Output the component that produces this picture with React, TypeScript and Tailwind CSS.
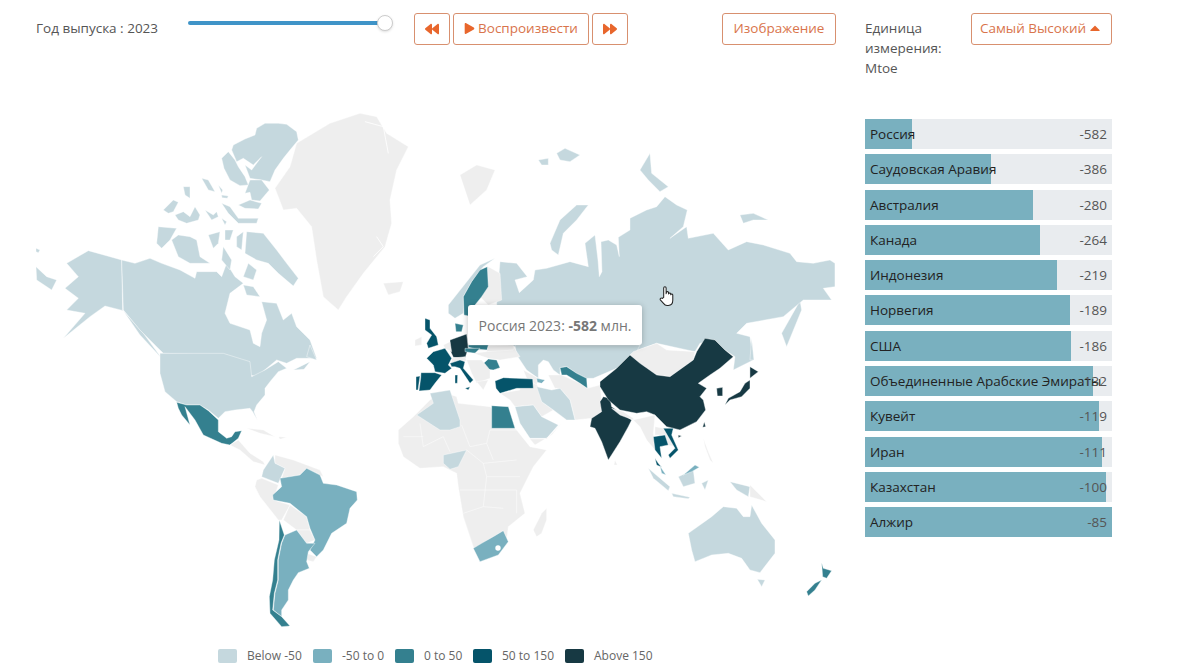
import { FaBackward, FaCaretUp, FaForward, FaPlay } from 'react-icons/fa';

const LIGHT = '#c5d8de';
const MID = '#79b0bf';
const TEAL = '#34808f';
const DEEP = '#05546a';
const DARK = '#173943';
const GREY = '#eeeeee';

type Shape = [string, string];

// coordinates are 3x page pixels, measured from the offset of each group
const canada: Shape[] = [
  [GREY, '735,265 780,200 800,130 900,70 990,40 1040,50 1070,100 1135,140 1100,210 1080,300 1085,370 1065,440 1000,520 950,590 925,630 880,590 860,480 845,380 800,325 760,330 745,290'],
  [GREY, '1060,550 1120,545 1110,575 1075,585'],
  [LIGHT, '110,490 175,452 275,480 278,630 340,700 395,775 330,705 280,632 225,618 180,650 100,715 165,640 110,630 145,595 105,565 145,530'],
  [LIGHT, '18,500 50,530 80,540 65,570 20,540'],
  [LIGHT, '18,445 30,450 25,458 18,455'],
  [LIGHT, '275,480 315,490 360,475 395,490 450,510 495,535 500,515 560,515 575,530 590,490 615,530 640,550 600,580 585,640 600,670 660,690 670,730 690,740 695,700 710,660 695,605 740,610 760,660 785,640 800,680 840,720 860,775 800,775 770,790 740,780 680,830 660,825 655,790 590,765 400,760 380,740 330,690 280,630'],
  [LIGHT, '385,380 440,385 420,420 395,445 380,430'],
  [LIGHT, '425,420 445,405 480,410 500,420 510,470 540,490 480,490 445,470'],
  [LIGHT, '535,405 570,395 565,430 550,445'],
  [LIGHT, '585,390 610,390 600,420 585,420'],
  [LIGHT, '620,410 640,395 635,450 620,440'],
  [LIGHT, '650,395 700,400 740,450 770,490 805,535 790,558 745,520 715,490 680,480 645,460'],
  [LIGHT, '580,440 605,480 600,510 575,480'],
  [LIGHT, '640,555 670,560 690,590 650,585'],
  [LIGHT, '655,490 680,510 670,540 640,530'],
];

const arctic: Shape[] = [
  [LIGHT, '250,90 285,72 315,60 320,40 345,25 385,25 410,28 440,50 445,75 420,105 400,130 375,165 360,200 335,195 300,190 285,150 305,165 335,125 310,150 280,130 260,140 245,105'],
  [LIGHT, '215,130 235,110 255,135 265,155 285,185 295,210 270,212 240,195 222,160'],
  [LIGHT, '300,195 335,195 358,225 330,258 305,255 300,232 285,235'],
  [LIGHT, '265,270 300,255 335,265 325,282 285,280'],
  [LIGHT, '155,190 175,195 195,230 175,225'],
  [LIGHT, '205,210 218,225 215,235'],
  [LIGHT, '215,265 240,275 265,310 325,310 320,325 265,325 250,310 235,295'],
  [LIGHT, '40,285 70,255 85,262 70,290 55,295'],
  [LIGHT, '75,300 100,290 120,305 135,275 150,300 145,315 110,325 85,315'],
  [LIGHT, '165,285 190,300 200,290 205,305 185,315'],
  [LIGHT, '215,310 230,320 225,330'],
  [LIGHT, '100,215 120,215 120,250 105,240'],
  [LIGHT, '215,240 235,243 232,250 216,248'],
];

const usa: Shape[] = [
  [LIGHT, '30,40 220,40 300,65 305,110 345,90 385,65 410,85 385,95 360,125 345,145 345,165 320,195 312,215 322,240 308,215 300,205 255,210 225,215 205,235 175,210 150,195 110,195 80,185 45,155 30,100'],
  [LIGHT, '430,90 480,65 462,88'],
  [LIGHT, '480,15 500,60 470,50'],
  [TEAL, '80,187 110,195 150,195 175,212 205,240 205,275 230,295 245,290 255,275 275,272 265,295 240,315 215,310 160,285 135,240 105,200 120,255 95,225 85,205'],
  [GREY, '240,315 265,300 300,340 340,365 345,375 310,365 270,330'],
  [GREY, '290,265 340,270 375,290 330,280'],
  [GREY, '385,290 410,292 390,298'],
];

const southAmericaAfrica: Shape[] = [
  [GREY, '375,225 430,240 510,270 520,290 470,265 450,285 395,295 405,265 375,250'],
  [LIGHT, '370,225 340,270 335,290 385,310 405,265 375,250'],
  [GREY, '320,300 335,295 385,315 370,360 420,375 395,420 385,420 330,350 315,320'],
  [GREY, '420,375 470,410 480,450 440,450 400,420'],
  [GREY, '440,450 480,450 495,480 470,490'],
  [GREY, '470,520 500,530 490,545 470,540'],
  [MID, '390,295 450,285 470,265 510,285 520,310 560,315 620,335 622,360 600,385 590,430 545,460 520,510 500,530 480,510 495,480 480,445 470,410 420,370 370,360 368,345 395,320'],
  [MID, '405,465 440,450 470,490 495,490 475,515 470,545 478,565 445,578 430,600 415,630 415,660 395,690 395,710 370,690 375,640 385,600 385,540 395,490'],
  [TEAL, '388,420 403,465 393,490 383,540 383,600 373,640 368,690 395,710 420,738 395,740 360,700 358,650 368,600 373,540 387,480'],
  [GREY, '745,150 790,110 840,60 880,35 920,50 925,70 1020,80 1100,150 1140,200 1190,210 1150,260 1110,340 1125,400 1075,440 1070,480 1040,520 990,545 970,500 940,410 925,320 920,280 880,260 810,265 760,230 745,190'],
  [GREY, '1190,385 1175,400 1150,450 1160,470 1175,460 1190,420'],
  [LIGHT, '880,225 950,210 925,260 900,268 880,250'],
  [MID, '970,505 995,490 1030,470 1060,452 1075,485 1045,525 990,545'],
];

const eurasia: Shape[] = [
  [GREY, '180,135 230,105 285,120 260,180 210,225'],
  [LIGHT, '415,90 445,85 445,105 425,105'],
  [LIGHT, '470,70 495,55 540,75 510,95 480,90'],
  [LIGHT, '450,340 480,270 530,225 565,225 530,270 490,310 475,375 455,360'],
  [LIGHT, '720,120 750,70 755,130 805,170 780,185 745,150'],
  [LIGHT, '1020,255 1060,250 1105,270 1060,270 1030,280'],
  [LIGHT, '1145,610 1190,530 1200,510 1205,540 1160,650'],
  [LIGHT, '300,395 350,400 382,440 345,450 358,488 400,450 405,420 440,415 510,395 565,410 555,340 585,315 594,390 598,440 606,425 603,335 625,330 650,345 658,380 655,322 690,300 690,265 740,240 770,230 795,200 830,225 862,240 850,290 810,325 860,290 865,325 940,310 985,360 1040,335 1090,345 1170,370 1190,395 1240,400 1290,390 1305,400 1305,470 1270,475 1295,510 1210,510 1150,560 1040,580 1010,610 1050,620 1060,690 1000,720 1005,680 975,660 945,630 900,640 885,665 770,640 700,665 640,650 560,655 420,650 375,690 345,650 300,640 290,520'],
];

const middleEast: Shape[] = [
  [LIGHT, '105,0 480,0 470,20 450,30 410,70 340,100 320,100 290,85 260,65 240,68 240,90 220,75 205,50 190,45 175,60 175,100 140,75 110,30'],
  [GREY, '205,90 245,90 300,115 322,130 360,120 365,165 365,200 335,220 285,225 270,165 240,130 225,130'],
  [GREY, '60,145 120,135 105,100 160,105 175,125 185,170 220,195 185,215 160,180 105,185 90,165'],
  [GREY, '130,75 175,100 170,120 140,100'],
  [LIGHT, '170,125 215,135 240,130 270,165 285,225 260,225 220,195 185,170'],
  [LIGHT, '105,185 160,180 185,215 235,240 200,280 150,280 120,235'],
  [GREY, '150,282 200,282 245,235 215,270 165,300'],
  [MID, '170,100 195,105 185,115 172,112'],
  [TEAL, '240,68 260,65 290,85 320,100 322,130 300,115 260,90 245,90'],
  [TEAL, '35,182 85,185 105,250 35,250'],
  [DEEP, '45,108 70,98 110,100 158,102 160,130 110,130 60,145 48,130'],
  [TEAL, '5,60 25,42 50,45 60,68 40,75 15,72'],
  [DARK, '370,155 390,160 395,185 455,225 445,245 420,290 385,345 365,290 345,250 330,245 335,220 365,200 360,170'],
];

const eastAsia: Shape[] = [
  [GREY, '700,665 770,640 800,660 885,665 880,690 810,740 770,735 720,700 690,675'],
  [DARK, '600,755 650,715 690,675 720,700 770,735 810,740 880,690 890,665 915,625 945,630 975,660 1000,680 960,715 930,735 895,760 920,775 900,800 910,810 917,840 890,875 840,900 800,890 765,855 740,845 710,850 660,840 625,810 600,770'],
  [LIGHT, '1055,625 1062,690 1050,690'],
  [DARK, '1050,710 1075,725 1050,745'],
];

const asiaPacific: Shape[] = [
  [GREY, '215,85 250,95 280,115 280,120 240,105'],
  [GREY, '280,120 345,105 340,160 345,210 320,180 300,140'],
  [GREY, '345,140 370,145 410,200 380,195 370,165 345,165'],
  [DEEP, '340,170 375,165 385,195 360,200 365,235 345,210'],
  [DEEP, '370,145 400,145 395,165 415,210 390,235 385,225 405,205'],
  [DEEP, '345,235 355,250 365,262 350,255'],
  [MID, '360,258 378,285 365,280'],
  [LIGHT, '325,265 390,320 385,332 340,295'],
  [LIGHT, '395,340 450,352 445,356 400,350'],
  [LIGHT, '415,290 460,270 465,310 430,320'],
  [MID, '430,285 465,255 478,262 455,275'],
  [LIGHT, '485,310 505,300 495,330'],
  [LIGHT, '570,305 630,320 625,350 590,330'],
  [GREY, '630,315 680,365 630,350'],
  [GREY, '490,175 505,215 520,250 510,240 495,200'],
  [GREY, '225,240 232,255 222,255'],
  [LIGHT, '445,460 515,410 550,380 590,385 610,410 630,410 635,375 665,430 705,480 705,520 660,578 630,570 605,535 565,520 515,525 465,545 455,510'],
  [LIGHT, '652,598 675,600 665,620'],
  [TEAL, '845,548 850,565 875,572 860,595 848,590'],
  [TEAL, '845,600 825,630 805,648 800,635 825,610'],
  [DARK, '630,0 630,25 605,50 570,60 555,75 565,55 600,35 615,10'],
  [DARK, '530,25 548,22 548,48 532,48'],
  [DARK, '493,125 497,140 488,142'],
  [DARK, '415,165 425,168 415,173'],
];

const scandinavia: Shape[] = [
  [GREY, '265,20 300,40 305,120 265,135 240,110'],
  [LIGHT, '145,135 240,15 285,-5 250,20 215,65 190,110 190,160 165,175 145,160'],
  [TEAL, '240,30 262,20 265,80 245,110 225,135 215,170 192,165 190,110 215,65'],
  [TEAL, '165,190 190,195 185,215 168,215'],
  [GREY, '45,240 65,230 65,255 45,258'],
  [DEEP, '75,175 90,180 90,205 110,230 115,255 85,265 80,250 95,225 75,210'],
  [DARK, '150,240 200,222 205,265 195,295 160,292 150,270'],
  [TEAL, '205,255 265,255 262,270 235,268 205,262'],
  [TEAL, '195,265 240,265 225,280 195,275'],
];

const southEurope: Shape[] = [
  [LIGHT, '20,225 70,190 60,160 120,150 150,240 150,260 120,270 90,270'],
  [GREY, '100,15 120,5 125,35 105,25'],
  [GREY, '125,55 165,50 170,62 125,70'],
  [GREY, '170,60 215,60 240,90 240,115 200,130 185,100'],
  [GREY, '200,125 235,120 220,150'],
  [GREY, '190,40 230,35 310,20 330,50 270,60 235,55'],
  [GREY, '235,18 310,15 310,30 230,35'],
  [DEEP, '70,35 105,25 125,55 115,75 125,85 105,100 75,95 70,75 50,55'],
  [DEEP, '33,98 75,98 95,105 75,130 60,150 27,153 32,115'],
  [DEEP, '18,110 30,108 24,150 18,150'],
  [DEEP, '120,70 150,60 165,65 160,85 190,120 180,130 150,85 135,80 125,80'],
  [DEEP, '165,145 180,140 175,150'],
  [DEEP, '135,105 143,105 142,130 135,130'],
];

const bars = [
  { name: 'Россия', value: -582, width: 47 },
  { name: 'Саудовская Аравия', value: -386, width: 126 },
  { name: 'Австралия', value: -280, width: 168 },
  { name: 'Канада', value: -264, width: 175 },
  { name: 'Индонезия', value: -219, width: 192 },
  { name: 'Норвегия', value: -189, width: 205 },
  { name: 'США', value: -186, width: 206 },
  { name: 'Объединенные Арабские Эмираты', value: -132, width: 228 },
  { name: 'Кувейт', value: -119, width: 234 },
  { name: 'Иран', value: -111, width: 237 },
  { name: 'Казахстан', value: -100, width: 241 },
  { name: 'Алжир', value: -85, width: 247 },
];

const legend = [
  { label: 'Below -50', color: 'bg-[#c5d8de]', width: 'w-[95px]' },
  { label: '-50 to 0', color: 'bg-[#79b0bf]', width: 'w-[82px]' },
  { label: '0 to 50', color: 'bg-[#34808f]', width: 'w-[78px]' },
  { label: '50 to 150', color: 'bg-[#05546a]', width: 'w-[92px]' },
  { label: 'Above 150', color: 'bg-[#173943]', width: 'w-[100px]' },
];

function Region({ x, y, shapes }: { x: number; y: number; shapes: Shape[] }) {
  return (
    <g transform={`translate(${x} ${y}) scale(0.3333)`} stroke="#fff" strokeWidth={1.2} strokeLinejoin="round">
      {shapes.map(([fill, points], i) => (
        <polygon key={i} fill={fill} points={points} />
      ))}
    </g>
  );
}

function WorldMap() {
  return (
    <svg viewBox="30 100 810 540" className="block w-[810px] h-[540px]">
      <Region x={30} y={100} shapes={canada} />
      <Region x={150} y={115} shapes={arctic} />
      <Region x={150} y={340} shapes={usa} />
      <Region x={150} y={380} shapes={southAmericaAfrica} />
      <Region x={400} y={130} shapes={eurasia} />
      <Region x={480} y={345} shapes={middleEast} />
      <Region x={400} y={130} shapes={eastAsia} />
      <Region x={540} y={380} shapes={asiaPacific} />
      <Region x={400} y={260} shapes={scandinavia} />
      <Region x={410} y={340} shapes={southEurope} />
      <g transform="translate(30 100) scale(0.3333)" stroke="#fff" strokeWidth={2.5} fill="none">
        <polyline points="1005,65 1060,80 1075,160" />
        <polyline points="1040,410 1060,440 1030,470" />
      </g>
      <g transform="translate(150 380) scale(0.3333)" stroke="#fff" strokeWidth={1.4} fill="none">
        <polyline points="810,130 820,200 880,170" />
        <polyline points="760,170 820,170" />
        <polyline points="935,135 960,200 1010,190 1020,150" />
        <polyline points="950,210 1000,250 1100,240" />
        <polyline points="1000,250 1010,290 1110,290" />
        <polyline points="930,330 1100,330 1100,400" />
        <polyline points="940,400 1000,380 1060,385" />
        <polyline points="1010,290 1000,380" />
        <polyline points="1020,150 1105,150" />
        <polyline points="1010,190 1030,240" />
        <polyline points="880,170 900,215" />
      </g>
      <circle cx="498" cy="548" r="2.7" fill="#fff" />
    </svg>
  );
}

function HandCursor() {
  return (
    <svg viewBox="0 0 16 24" className="absolute left-[629px] top-[184px] w-[15px] h-[25px]" fill="#fff" stroke="#222" strokeWidth={1.1} strokeLinejoin="round">
      <path d="M5 13V3a1.3 1.3 0 0 1 2.6 0v6l.2-1a1.2 1.2 0 0 1 2.4 0v1.2a1.2 1.2 0 0 1 2.3 0v1a1.1 1.1 0 0 1 2.2.3v5.5c0 3-1.8 5.5-4.8 5.5H8.6c-1.7 0-2.8-.8-3.8-2.2L1.4 15.6c-.8-1.3.8-2.6 2-1.5z" />
    </svg>
  );
}

export default function App() {
  return (
    <div className="flex w-[1200px] h-[672px] overflow-hidden bg-white text-[13.5px] text-[#555] font-['Open_Sans',sans-serif]">
      <div className="w-[865px] shrink-0 flex flex-col">
        <div className="h-[100px] flex items-start pt-[13px]">
          <span className="ml-[36px] w-[152px] mt-[5px] leading-[20px]">Год выпуска : 2023</span>
          <div className="relative w-[197px] h-[4px] mt-[8px] rounded-full bg-[#3f94c8]">
            <span className="absolute -right-[8px] -top-[6px] size-[16px] rounded-full bg-white border border-[#ccc] shadow" />
          </div>
          <div className="flex gap-[3px] ml-[29px]">
            <button className="w-[36px] h-[32px] flex items-center justify-center rounded-[3px] border border-[#d8906f] text-[#e8662c]">
              <FaBackward className="size-[14px]" />
            </button>
            <button className="w-[136px] h-[32px] pb-[2px] flex items-center justify-center gap-[3px] rounded-[3px] border border-[#d8906f] text-[#d9744b]">
              <FaPlay className="size-[11px] text-[#e8662c]" />
              Воспроизвести
            </button>
            <button className="w-[36px] h-[32px] flex items-center justify-center rounded-[3px] border border-[#d8906f] text-[#e8662c]">
              <FaForward className="size-[14px]" />
            </button>
          </div>
          <button className="w-[114px] h-[32px] pb-[2px] ml-[94px] rounded-[3px] border border-[#d8906f] text-[#d9744b]">
            Изображение
          </button>
        </div>
        <div className="relative ml-[30px] w-[810px] h-[540px]">
          <WorldMap />
          <div className="absolute left-[438px] top-[205px] w-[174px] h-[40px] flex items-center justify-center whitespace-nowrap rounded-[3px] bg-white text-[14px] text-[#777] shadow-[0_1px_6px_rgba(0,0,0,0.25)]">
            Россия 2023:&nbsp;<b className="font-bold">-582</b>&nbsp;млн.
          </div>
          <HandCursor />
        </div>
        <div className="flex items-center ml-[218px] mt-[7px] text-[12px] text-[#666]">
          {legend.map((l) => (
            <div key={l.label} className={`flex items-center gap-[10px] ${l.width}`}>
              <span className={`w-[19px] h-[14px] rounded-[2px] ${l.color}`} />
              {l.label}
            </div>
          ))}
        </div>
      </div>
      <div className="w-[247px] shrink-0">
        <div className="h-[119px] flex items-start justify-between pt-[13px]">
          <div className="w-[90px] mt-[5px] leading-[20px]">Единица измерения: Mtoe</div>
          <button className="w-[141px] h-[32px] pb-[2px] flex items-center justify-center gap-[1px] rounded-[3px] border border-[#d8906f] text-[#d9744b]">
            Самый Высокий
            <FaCaretUp className="size-[16px] text-[#e8662c]" />
          </button>
        </div>
        <div className="flex flex-col gap-[5.3px]">
          {bars.map((b) => (
            <div key={b.name} className="relative h-[30px] bg-[#e9ecef] leading-[30px] whitespace-nowrap">
              <div className="absolute left-0 top-0 h-full bg-[#79b0bf]" style={{ width: b.width }} />
              <span className="absolute left-[5px] top-0 text-[#222]">{b.name}</span>
              <span className="absolute right-[5px] top-0 text-[#555]">{b.value}</span>
            </div>
          ))}
        </div>
      </div>
    </div>
  );
}
